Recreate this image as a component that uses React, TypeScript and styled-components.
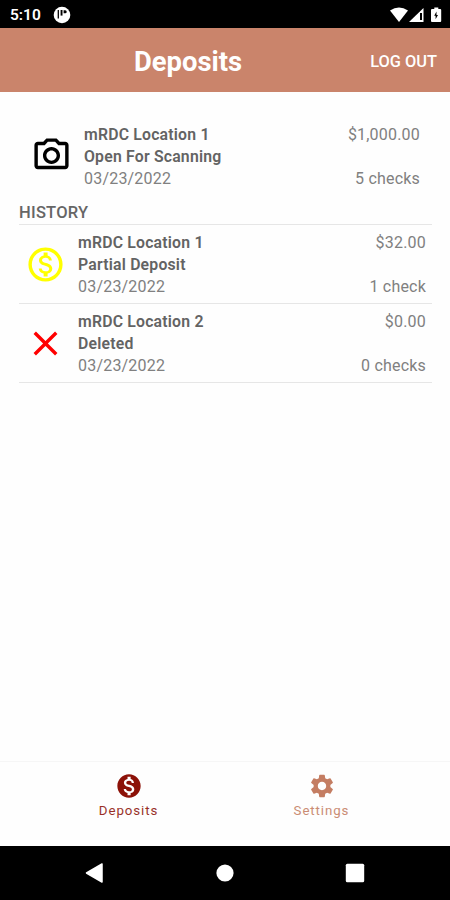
import React from 'react';
import styled, { createGlobalStyle } from 'styled-components';
import {
  MdClose,
  MdMonetizationOn,
  MdOutlineMonetizationOn,
  MdOutlinePhotoCamera,
  MdSettings,
} from 'react-icons/md';

const GlobalStyle = createGlobalStyle`
  * { box-sizing: border-box; }
  body { margin: 0; background: #fff; }
`;

const Screen = styled.div`
  width: 450px;
  height: 900px;
  display: flex;
  flex-direction: column;
  overflow: hidden;
  background: #fefefe;
  font-family: Roboto, 'Liberation Sans', sans-serif;
`;

const StatusBar = styled.div`
  flex: none;
  height: 28px;
  display: flex;
  align-items: center;
  padding: 2px 7px 0 10px;
  background: #000;
  color: #fff;
`;

const Clock = styled.span`
  width: 43px;
  font-size: 15.5px;
  font-weight: 600;
  line-height: 20px;
`;

const StatusIcons = styled.div`
  display: flex;
  margin-left: auto;
`;

const Header = styled.header`
  flex: none;
  height: 64px;
  display: grid;
  grid-template-columns: 1fr auto 1fr;
  align-items: center;
  padding: 3px 13px 0 0;
  margin-bottom: 1px;
  background: #ca846b;
  color: #fff;
`;

const Title = styled.h1`
  grid-column: 2;
  margin: 0;
  padding-right: 61px;
  font-size: 27.4px;
  line-height: 32px;
  font-weight: 700;
`;

const LogOut = styled.button`
  justify-self: end;
  padding: 0;
  border: 0;
  background: none;
  color: #fff;
  font: 500 16.4px/20px Roboto, sans-serif;
  white-space: nowrap;
`;

const Content = styled.main`
  flex: 1;
  padding: 31px 18px 0 19px;
`;

const Row = styled.div<{ $open?: boolean }>`
  height: 79px;
  display: flex;
  padding: ${(p) => (p.$open ? '0 12px 0 11px' : '7px 6px 0 5px')};
  border-bottom: ${(p) => (p.$open ? '0' : '1.5px solid #e6e6e6')};
`;

const IconSlot = styled.div<{ $open?: boolean }>`
  flex: none;
  width: 54px;
  height: ${(p) => (p.$open ? '62px' : '64px')};
  padding-left: 0.6px;
  display: flex;
  align-items: center;
`;

const Info = styled.div`
  display: flex;
  flex-direction: column;
  color: #808080;
  font-size: 16px;
  line-height: 22px;
  letter-spacing: 0.2px;
`;

const Strong = styled.span`
  color: #636363;
  font-size: 15.8px;
  font-weight: 600;
`;

const Amounts = styled(Info)`
  height: 66px;
  margin-left: auto;
  justify-content: space-between;
  align-items: flex-end;
`;

const SectionTitle = styled.h2`
  height: 22px;
  margin: 0;
  border-bottom: 1.5px solid #e6e6e6;
  color: #666;
  font-size: 16.5px;
  font-weight: 500;
  line-height: 20px;
  letter-spacing: 0.25px;
`;

const TabBar = styled.nav`
  flex: none;
  height: 85px;
  display: flex;
  justify-content: center;
  border-top: 1px solid #f6f6f6;
`;

const Tab = styled.div<{ $active?: boolean }>`
  width: 193px;
  display: flex;
  flex-direction: column;
  align-items: center;
  padding-top: 10px;
  color: ${(p) => (p.$active ? '#8c1208' : '#c47d62')};
`;

const TabLabel = styled.span`
  margin-top: 1px;
  font-size: 13.3px;
  line-height: 20px;
  letter-spacing: 0.9px;
  opacity: 0.88;
`;

const SystemNav = styled.div`
  flex: none;
  height: 54px;
  display: flex;
  align-items: center;
  justify-content: space-between;
  padding: 0 85px;
  background: #000;
`;

type Deposit = {
  location: string;
  status: string;
  date: string;
  amount: string;
  checks: string;
  icon: React.ReactNode;
  open?: boolean;
};

const current: Deposit = {
  location: 'mRDC Location 1',
  status: 'Open For Scanning',
  date: '03/23/2022',
  amount: '$1,000.00',
  checks: '5 checks',
  icon: <MdOutlinePhotoCamera size={41} color="#000" />,
  open: true,
};

const history: Deposit[] = [
  {
    location: 'mRDC Location 1',
    status: 'Partial Deposit',
    date: '03/23/2022',
    amount: '$32.00',
    checks: '1 check',
    icon: <MdOutlineMonetizationOn size={41} color="#ff0" />,
  },
  {
    location: 'mRDC Location 2',
    status: 'Deleted',
    date: '03/23/2022',
    amount: '$0.00',
    checks: '0 checks',
    icon: <MdClose size={41} color="#f00" />,
  },
];

function DepositRow({ location, status, date, amount, checks, icon, open }: Deposit) {
  return (
    <Row $open={open}>
      <IconSlot $open={open}>{icon}</IconSlot>
      <Info>
        <Strong>{location}</Strong>
        <Strong>{status}</Strong>
        <span>{date}</span>
      </Info>
      <Amounts>
        <span>{amount}</span>
        <span>{checks}</span>
      </Amounts>
    </Row>
  );
}

export default function App() {
  return (
    <Screen>
      <GlobalStyle />
      <StatusBar>
        <Clock>5:10</Clock>
        <svg width="18" height="18" viewBox="0 0 18 18">
          <circle cx="9" cy="9" r="8.3" fill="#fff" />
          <path d="M5.3 4v8.5" fill="none" stroke="#000" strokeWidth="1.3" />
          <path d="M7.6 4h1.9v5.6H7.6z" fill="#000" />
          <path d="M10.6 4.2h1.6a1.5 1.5 0 0 1 0 3h-1.6z" fill="#000" />
        </svg>
        <StatusIcons>
          <svg width="54" height="18" viewBox="0 0 54 18">
            <path d="M1 4.5Q10 -1.5 19 4.5L10 16z" fill="#fff" />
            <path d="M20 16 34.5 2v14z" fill="#fff" />
            <path d="M31 7h2v7h-2z" fill="#000" />
            <path d="M43 3h2.3V1.5h4V3h1.9q1 0 1 1v11q0 1-1 1H43q-1 0-1-1V4q0-1 1-1z" fill="#fff" />
            <path d="m47.5 5.5-2.3 4.3h1.4v3.4l2.4-4.3h-1.5z" fill="#000" />
          </svg>
        </StatusIcons>
      </StatusBar>
      <Header>
        <Title>Deposits</Title>
        <LogOut>LOG OUT</LogOut>
      </Header>
      <Content>
        <DepositRow {...current} />
        <SectionTitle>HISTORY</SectionTitle>
        {history.map((deposit) => (
          <DepositRow key={deposit.location} {...deposit} />
        ))}
      </Content>
      <TabBar>
        <Tab $active>
          <MdMonetizationOn size={28} />
          <TabLabel>Deposits</TabLabel>
        </Tab>
        <Tab>
          <MdSettings size={28} />
          <TabLabel>Settings</TabLabel>
        </Tab>
      </TabBar>
      <SystemNav>
        <svg width="20" height="22" viewBox="0 0 20 22">
          <path d="M1.5 11 17 2v18z" fill="#fff" stroke="#fff" strokeWidth="1.5" strokeLinejoin="round" />
        </svg>
        <svg width="20" height="20" viewBox="0 0 20 20">
          <circle cx="10" cy="10" r="8.6" fill="#fff" />
        </svg>
        <svg width="20" height="20" viewBox="0 0 20 20">
          <rect x="0.8" y="0.8" width="18.4" height="18.4" rx="1.5" fill="#fff" />
        </svg>
      </SystemNav>
    </Screen>
  );
}
